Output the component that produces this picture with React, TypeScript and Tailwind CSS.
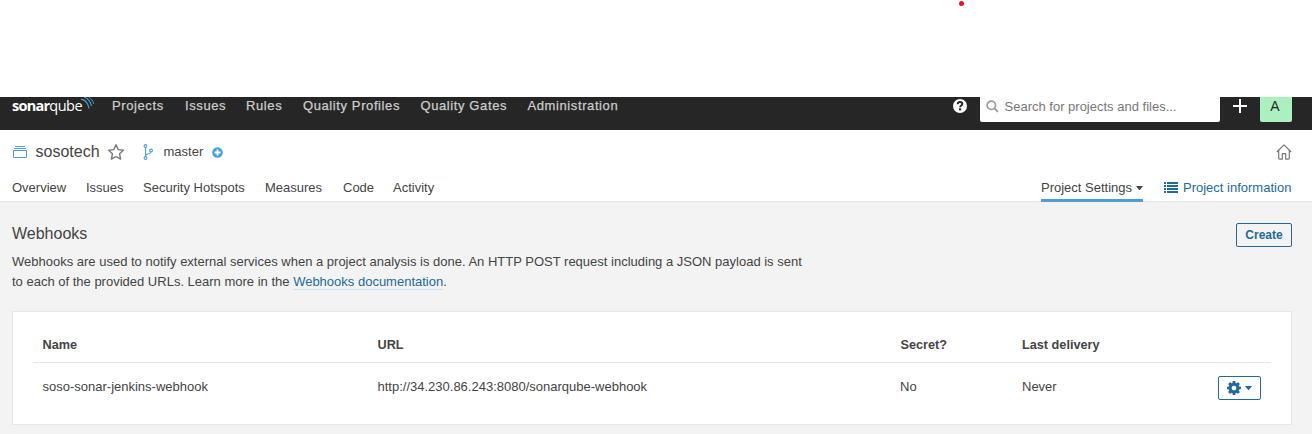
import React from 'react';

const navItems = [
  { label: 'Projects', cls: 'w-[73px]' },
  { label: 'Issues', cls: 'w-[61px]' },
  { label: 'Rules', cls: 'w-[57px]' },
  { label: 'Quality Profiles', cls: 'w-[117.500px]' },
  { label: 'Quality Gates', cls: 'w-[107px]' },
  { label: 'Administration', cls: 'w-[100px]' },
];

const tabs = [
  { label: 'Overview', cls: 'w-[74px]' },
  { label: 'Issues', cls: 'w-[57px]' },
  { label: 'Security Hotspots', cls: 'w-[122px]' },
  { label: 'Measures', cls: 'w-[78px]' },
  { label: 'Code', cls: 'w-[50px]' },
  { label: 'Activity', cls: 'w-[50px]' },
];

function Logo() {
  return (
    <a className="flex h-[18px] w-[100px] items-start text-white">
      <span className="flex h-[18px] w-[69px] items-center whitespace-nowrap font-['Open_Sans',sans-serif] text-[14.500px] leading-[18px]">
        <span className="w-[37.500px] font-bold tracking-[-0.75px]">sonar</span>
        <span className="font-normal tracking-[-0.5px]">qube</span>
      </span>
      <svg className="h-[16px] w-[14px] shrink-0" viewBox="0 0 14 16" fill="none" stroke="#4b9fd5">
        <path d="M0 2.200c4 .6 7 3.800 8 9.300" strokeWidth="1.200" />
        <path d="M3 0c4 1.500 6.500 4.500 7.500 9" strokeWidth="1.100" />
        <path d="M7.500 0c2.800 1.700 4.500 4 5.300 7" strokeWidth=".9" />
      </svg>
    </a>
  );
}

function HelpIcon() {
  return (
    <svg className="size-[14px]" viewBox="0 0 14 14">
      <circle cx="7" cy="7" r="7" fill="#fff" />
      <path d="M4.700 5.300c.1-1.500 1.100-2.200 2.300-2.200 1.400 0 2.300.8 2.300 1.900 0 1.600-2.200 1.500-2.200 3.300" fill="none" stroke="#262626" strokeWidth="2" />
      <rect x="6" y="9.300" width="2.200" height="2.100" fill="#262626" />
    </svg>
  );
}

function SearchIcon() {
  return (
    <svg className="size-[13px]" viewBox="0 0 13 13" fill="none" stroke="#999">
      <circle cx="5.300" cy="5.300" r="4.200" strokeWidth="1.700" />
      <path d="M8.400 8.400l3 3" strokeWidth="1.900" strokeLinecap="round" />
    </svg>
  );
}

function ProjectIcon() {
  return (
    <svg className="h-[14px] w-[16px]" viewBox="0 0 16 14" fill="none" stroke="#4b9fd5">
      <path d="M3 1.500h10M2 3.500h12M1.500 5.500h13v6.500q0 .5-.5.5h-12q-.5 0-.5-.5z" />
    </svg>
  );
}

function StarIcon() {
  return (
    <svg className="size-[18px]" viewBox="0 0 18 18" fill="none" stroke="#777" strokeWidth="1.400" strokeLinejoin="round">
      <path d="M9 1.700l2.250 4.900 5.150.6-3.850 3.600 1.050 5.300L9 13.500l-4.600 2.600 1.050-5.300L1.600 7.200l5.150-.6z" />
    </svg>
  );
}

function BranchIcon() {
  return (
    <svg className="h-[16px] w-[10px]" viewBox="0 0 10 16" fill="none" stroke="#4b9fd5" strokeWidth="1.100">
      <circle cx="2.500" cy="2" r="1.400" />
      <circle cx="2.500" cy="14" r="1.400" />
      <circle cx="8" cy="6.500" r="1.400" />
      <path d="M2.500 3.500v9M8 8c-.5 2.200-5 1.500-5.500 4" />
    </svg>
  );
}

function PlusCircleIcon() {
  return (
    <svg className="size-[11px]" viewBox="0 0 11 11">
      <circle cx="5.500" cy="5.500" r="5.300" fill="#4b9fd5" />
      <path d="M5.500 2.500v6M2.500 5.500h6" stroke="#fff" strokeWidth="1.800" />
    </svg>
  );
}

function HomeIcon() {
  return (
    <svg className="size-[16px]" viewBox="0 0 16 16" fill="none" stroke="#777" strokeWidth="1.200" strokeLinejoin="round">
      <path d="M.8 8L8 .9 15.200 8M2.700 6.500V14.300q0 .8.8.8H6.300V9.600H9.700V15.100h2.800q.8 0 .8-.8V6.500" />
    </svg>
  );
}

function ListIcon() {
  return (
    <svg className="h-[11px] w-[14px]" viewBox="0 0 14 11" fill="#236a97">
      <path d="M0 0h2v2H0zM3 0h11v2H3zM0 3h2v2H0zM3 3h11v2H3zM0 6h2v2H0zM3 6h11v2H3zM0 9h2v2H0zM3 9h11v2H3z" />
    </svg>
  );
}

function Caret({ className }: { className: string }) {
  return (
    <svg className={className} viewBox="0 0 8 4" preserveAspectRatio="none" fill="currentColor">
      <path d="M0 0h8L4.400 4h-.8z" />
    </svg>
  );
}

function GearIcon() {
  return (
    <svg className="size-[14px]" viewBox="0 0 1536 1536" fill="currentColor">
      <path d="M1024 768q0-106-75-181t-181-75-181 75-75 181 75 181 181 75 181-75 75-181zm512-109v222q0 12-8 23t-20 13l-185 28q-19 54-39 91 35 50 107 138 10 12 10 25t-9 23q-27 37-99 108t-94 71q-12 0-26-9l-138-108q-44 23-91 38-16 136-29 186-7 28-36 28H657q-14 0-24.500-8.500T621 1506l-28-184q-49-16-90-37l-141 107q-10 9-25 9-14 0-25-11-126-114-165-168-7-10-7-23 0-12 8-23 15-21 51-66.500t54-70.500q-27-50-41-99L29 913q-13-2-21-12.500T0 877V655q0-12 8-23t19-13l186-28q14-46 39-92-40-57-107-138-10-12-10-24 0-10 9-23 26-36 98.500-107.500T337 135q13 0 26 10l138 107q44-23 91-38 16-136 29-186 7-28 36-28h222q14 0 24.500 8.500T915 30l28 184q49 16 90 37l142-107q9-9 24-9 13 0 25 10 129 119 165 170 7 8 7 22 0 12-8 23-15 21-51 66.500t-54 70.500q26 50 41 98l183 28q13 2 21 12.500t8 23.500z" />
    </svg>
  );
}

export default function App() {
  return (
    <div className="h-[434px] w-[1312px] overflow-hidden bg-[#f3f3f3] font-['Liberation_Sans',Arial,sans-serif] text-[13px] leading-5 text-[#444]">
      <div className="flex h-[97px] bg-white pl-[958.500px] pt-px">
        <span className="size-[5px] rounded-full bg-[#e81123]" />
      </div>

      <header className="flex h-[33px] justify-between bg-[#262626] pl-3 pr-5">
        <div className="flex items-start">
          <Logo />
          <nav className="-mt-px flex whitespace-nowrap tracking-[0.6px] text-[#ccc] [-webkit-text-stroke:0.25px_#ccc]">
            {navItems.map((item) => (
              <a key={item.label} className={item.cls}>{item.label}</a>
            ))}
          </nav>
        </div>
        <div className="flex items-start">
          <span className="mr-[13px] mt-[2px]"><HelpIcon /></span>
          <div className="flex h-[25px] w-[240px] rounded-b-[2px] bg-white pl-[6px] text-[#777]">
            <span className="mr-[5.500px] mt-[3px]"><SearchIcon /></span>
            <span>Search for projects and files...</span>
          </div>
          <svg className="ml-[13px] mr-[13px] mt-[2px] size-[14px]" viewBox="0 0 14 14" stroke="#fff" strokeWidth="2">
            <path d="M7 0v14M0 7h14" />
          </svg>
          <div className="flex h-[25px] w-8 justify-center rounded-b-[2px] bg-[#adf0bf] pr-[2px] text-[14px] leading-[19px] text-[#262626]">A</div>
        </div>
      </header>

      <section className="flex h-[72px] flex-col justify-between border-b border-[#e6e6e6] bg-white pl-3 pr-5">
        <div className="flex h-[44px] items-center justify-between">
          <div className="flex items-center">
            <ProjectIcon />
            <span className="ml-[7.500px] w-[64.500px] whitespace-nowrap text-[16px]">sosotech</span>
            <span className="ml-[7px]"><StarIcon /></span>
            <span className="ml-[18px]"><BranchIcon /></span>
            <span className="ml-[10.500px] w-[40px]">master</span>
            <span className="ml-[8px]"><PlusCircleIcon /></span>
          </div>
          <HomeIcon />
        </div>
        <div className="-mb-px flex h-[28px] justify-between">
          <nav className="flex whitespace-nowrap pt-[4px]">
            {tabs.map((tab) => (
              <a key={tab.label} className={tab.cls}>{tab.label}</a>
            ))}
          </nav>
          <div className="flex whitespace-nowrap">
            <a className="flex h-[28px] w-[102px] justify-between border-b-[3px] border-[#4b9fd5] pt-[4px]">
              <span>Project Settings</span>
              <Caret className="mt-[8px] h-[4px] w-[7px]" />
            </a>
            <a className="ml-[21px] flex w-[128px] pt-[4px] text-[#236a97]">
              <span className="mr-[5px] mt-[4px]"><ListIcon /></span>
              <span>Project information</span>
            </a>
          </div>
        </div>
      </section>

      <main className="px-3 pr-5 pt-[21px]">
        <div className="flex h-[29px] items-start justify-between">
          <h1 className="pt-px text-[16px] leading-5">Webhooks</h1>
          <button className="h-[24px] w-[56px] rounded-[2px] border border-[#236a97] text-[12px] font-bold leading-[22px] text-[#236a97]">Create</button>
        </div>
        <p className="w-[800px] whitespace-nowrap">
          Webhooks are used to notify external services when a project analysis is done. An HTTP POST request including a JSON payload is sent
          <br />
          to each of the provided URLs. Learn more in the{' '}
          <a className="border-b border-[#cae3f2] text-[#236a97]">Webhooks documentation</a>.
        </p>

        <div className="mt-[19px] h-[114px] border border-[#e6e6e6] bg-white px-[20px] pt-[20px]">
          <div className="grid h-[31px] grid-cols-[335px_523px_121.500px_1fr] border-b border-[#e6e6e6] pl-[9.500px] pt-[3px] text-[12.700px] font-bold">
            <span>Name</span>
            <span>URL</span>
            <span>Secret?</span>
            <span>Last delivery</span>
          </div>
          <div className="grid grid-cols-[335px_522.500px_122px_1fr_53px] pl-[9.500px] pt-[13px]">
            <span className="pt-px">soso-sonar-jenkins-webhook</span>
            <span className="pt-px">http://34.230.86.243:8080/sonarqube-webhook</span>
            <span className="pt-px">No</span>
            <span className="pt-px">Never</span>
            <button className="flex h-[24px] w-[43px] items-center rounded-[2px] border border-[#236a97] pl-[8px] text-[#236a97]">
              <GearIcon />
              <Caret className="ml-[4px] h-[4px] w-[7px]" />
            </button>
          </div>
        </div>
      </main>
    </div>
  );
}
